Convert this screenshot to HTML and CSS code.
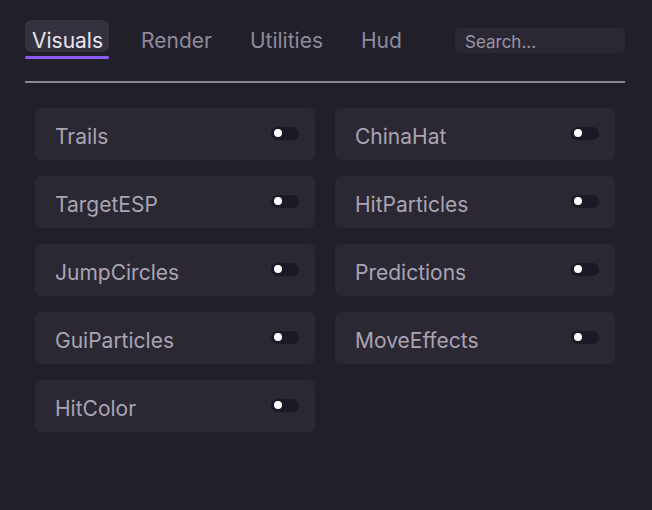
FILE: index.html
```html
<!DOCTYPE html>
<html>
<head>
<meta charset="utf-8">
<link rel="stylesheet" href="styles.css">
</head>
<body>
<div class="panel">
  <div class="header">
    <nav class="tabs">
      <div class="tab active"><span class="tab-label">Visuals</span></div>
      <div class="tab"><span class="tab-label">Render</span></div>
      <div class="tab"><span class="tab-label">Utilities</span></div>
      <div class="tab"><span class="tab-label">Hud</span></div>
    </nav>
    <div class="search">Search...</div>
  </div>
  <div class="divider"></div>
  <div class="grid">
    <div class="card"><span class="name">Trails</span><span class="toggle"><span class="dot"></span></span></div>
    <div class="card"><span class="name">ChinaHat</span><span class="toggle"><span class="dot"></span></span></div>
    <div class="card"><span class="name">TargetESP</span><span class="toggle"><span class="dot"></span></span></div>
    <div class="card"><span class="name">HitParticles</span><span class="toggle"><span class="dot"></span></span></div>
    <div class="card"><span class="name">JumpCircles</span><span class="toggle"><span class="dot"></span></span></div>
    <div class="card"><span class="name">Predictions</span><span class="toggle"><span class="dot"></span></span></div>
    <div class="card"><span class="name">GuiParticles</span><span class="toggle"><span class="dot"></span></span></div>
    <div class="card"><span class="name">MoveEffects</span><span class="toggle"><span class="dot"></span></span></div>
    <div class="card"><span class="name">HitColor</span><span class="toggle"><span class="dot"></span></span></div>
  </div>
</div>
</body>
</html>
```
FILE: styles.css
```css
html, body {
  margin: 0;
  padding: 0;
}
body {
  background: #211f2a;
  width: 652px;
  height: 510px;
  overflow: hidden;
  font-family: Inter, "Noto Sans", sans-serif;
}
.panel {
  padding: 20px 27px 0 25px;
}
.header {
  display: flex;
  justify-content: space-between;
  align-items: flex-start;
  height: 40px;
}
.tabs {
  display: flex;
  gap: 25px;
}
.tab {
  display: flex;
  flex-direction: column;
}
.tab-label {
  display: block;
  height: 27px;
  line-height: 32px;
  padding: 5px 6px 0 7px;
  border-radius: 6px;
  font-size: 21px;
  color: #8f8a9c;
  overflow: hidden;
}
.tab::after {
  content: "";
  display: block;
  height: 3px;
  margin-top: 4px;
  border-radius: 2px;
  background: transparent;
}
.tab.active .tab-label {
  background: #35313f;
  color: #e8e6ee;
}
.tab.active::after {
  background: #8b5cf6;
}
.search {
  margin-top: 8px;
  width: 160px;
  height: 25px;
  line-height: 29px;
  padding-left: 10px;
  border-radius: 5px;
  background: #2b2833;
  color: #9a95a6;
  font-size: 17px;
  overflow: hidden;
}
.divider {
  margin-top: 21px;
  height: 2px;
  background: #8a8597;
}
.grid {
  margin: 25px 0 0 10px;
  display: grid;
  grid-template-columns: 280px 280px;
  column-gap: 20px;
  row-gap: 16px;
}
.card {
  height: 52px;
  border-radius: 6px;
  background: #2b2833;
  display: flex;
  align-items: center;
  justify-content: space-between;
  padding: 0 16px 0 20px;
}
.name {
  font-size: 21px;
  color: #a9a4b4;
  margin-top: 4px;
}
.toggle {
  width: 28px;
  height: 13px;
  border-radius: 7px;
  background: #1b1926;
  display: flex;
  align-items: center;
  padding-left: 3px;
  box-sizing: border-box;
  margin-bottom: 2px;
}
.dot {
  width: 8px;
  height: 8px;
  border-radius: 50%;
  background: #ffffff;
}
```
